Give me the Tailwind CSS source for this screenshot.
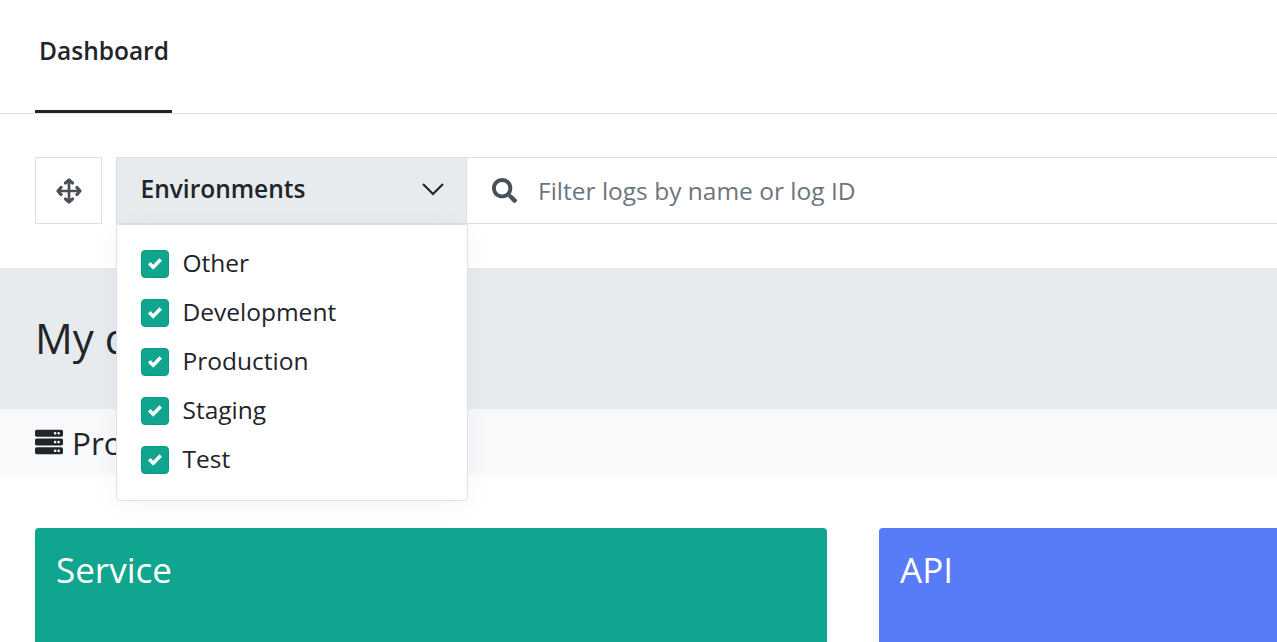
<!DOCTYPE html>
<html lang="en">
<head>
<meta charset="utf-8">
<title>Dashboard</title>
<script src="https://cdn.jsdelivr.net/npm/@tailwindcss/browser@4"></script>
</head>
<body class="flex h-[642px] flex-col overflow-hidden bg-white font-['Open_Sans',sans-serif] text-[#212529]">
<svg class="hidden">
  <symbol id="check" viewBox="0 0 8 8"><path fill="#fff" d="M6.564.75l-3.590 3.612-1.538-1.550L0 4.260 2.974 7.250 8 2.193z"/></symbol>
</svg>
<nav class="flex h-[114px] shrink-0 border-b border-[#dee2e6] pl-[35px]">
  <a class="h-[113px] w-[137px] border-b-3 border-[#212529] pt-[34px] pl-[1px] text-center text-[24.5px] leading-[34px] font-semibold">Dashboard</a>
</nav>
<div class="flex h-[154px] shrink-0 pt-[43px] pl-[35px]">
  <button class="mr-[14px] flex h-[67px] w-[67px] items-center justify-center border border-[#dadfee]">
    <svg class="size-[26px]" viewBox="0 0 26 26" fill="none" stroke="#495057" stroke-width="2.7"><path d="M13 2v22M2 13h22"/><path stroke-width="3.2" stroke-linecap="round" stroke-linejoin="round" d="M9.500 5L13 2l3.500 3M9.500 21L13 24l3.500-3M5 9.500L2 13l3 3.500M21 9.500L24 13l-3 3.500"/></svg>
  </button>
  <div class="relative h-[67px] w-[351px]">
    <button class="flex h-[67px] w-[351px] items-center justify-between border border-[#dadfee] bg-[#e7ebee] pr-[21.5px] pb-[4px] pl-[23.5px] text-[24.5px] font-semibold">
      <span class="pt-[2px]">Environments</span>
      <svg class="h-[14px] w-6" viewBox="0 0 24 14" fill="none" stroke="#212529" stroke-width="2.2"><path d="M2 2l10 10L22 2"/></svg>
    </button>
    <div class="absolute top-[67px] left-0 z-10 flex h-[277px] w-[352px] flex-col gap-[15px] rounded-b-[4px] border border-[#dadfee] bg-white pt-[21px] pl-6 text-[24.500px] leading-[34px] shadow-[0_4px_28px_rgba(30,10,40,0.045)]">
      <label class="flex h-[34px] gap-[13.5px]"><span class="mt-1 flex size-7 items-center justify-center rounded-[4px] border border-[#0b9a83] bg-[#0fa58e]"><svg class="size-[14px]"><use href="#check"/></svg></span><span>Other</span></label>
      <label class="flex h-[34px] gap-[13.5px]"><span class="mt-1 flex size-7 items-center justify-center rounded-[4px] border border-[#0b9a83] bg-[#0fa58e]"><svg class="size-[14px]"><use href="#check"/></svg></span><span>Development</span></label>
      <label class="flex h-[34px] gap-[13.5px]"><span class="mt-1 flex size-7 items-center justify-center rounded-[4px] border border-[#0b9a83] bg-[#0fa58e]"><svg class="size-[14px]"><use href="#check"/></svg></span><span>Production</span></label>
      <label class="flex h-[34px] gap-[13.5px]"><span class="mt-1 flex size-7 items-center justify-center rounded-[4px] border border-[#0b9a83] bg-[#0fa58e]"><svg class="size-[14px]"><use href="#check"/></svg></span><span>Staging</span></label>
      <label class="flex h-[34px] gap-[13.5px]"><span class="mt-1 flex size-7 items-center justify-center rounded-[4px] border border-[#0b9a83] bg-[#0fa58e]"><svg class="size-[14px]"><use href="#check"/></svg></span><span>Test</span></label>
    </div>
  </div>
  <div class="flex h-[67px] flex-1 items-center border-y border-[#dadfee] pl-[25px] text-[24.5px] text-[#6c757d]">
    <svg class="mr-[21px] size-[25px]" viewBox="0 0 512 512" fill="#495057"><path d="M505 442.700L405.300 343c-4.500-4.500-10.600-7-17-7H372c27.600-35.300 44-79.700 44-128C416 93.100 322.900 0 208 0S0 93.100 0 208s93.100 208 208 208c48.300 0 92.700-16.400 128-44v16.300c0 6.400 2.500 12.500 7 17l99.700 99.700c9.400 9.400 24.600 9.400 33.900 0l28.300-28.300c9.400-9.400 9.400-24.600.1-34zM208 336c-70.700 0-128-57.200-128-128 0-70.700 57.200-128 128-128 70.700 0 128 57.200 128 128 0 70.700-57.200 128-128 128z"/></svg>
    <span class="pt-[2px]">Filter logs by name or log ID</span>
  </div>
</div>
<header class="flex h-[141px] shrink-0 items-center bg-[#e7ebee] pb-[2px] pl-[35px]">
  <h1 class="text-[42px] leading-[56px]">My dashboard</h1>
</header>
<section class="flex h-[66px] shrink-0 items-center bg-[#f8f9fb] pl-[35px]">
  <svg class="mr-[9px] mb-[1px] size-7" viewBox="0 0 512 512" fill="#212529"><path d="M480 160H32c-17.673 0-32-14.327-32-32V64c0-17.673 14.327-32 32-32h448c17.673 0 32 14.327 32 32v64c0 17.673-14.327 32-32 32zm-48-88c-13.255 0-24 10.745-24 24s10.745 24 24 24 24-10.745 24-24-10.745-24-24-24zm-64 0c-13.255 0-24 10.745-24 24s10.745 24 24 24 24-10.745 24-24-10.745-24-24-24zm112 248H32c-17.673 0-32-14.327-32-32v-64c0-17.673 14.327-32 32-32h448c17.673 0 32 14.327 32 32v64c0 17.673-14.327 32-32 32zm-48-88c-13.255 0-24 10.745-24 24s10.745 24 24 24 24-10.745 24-24-10.745-24-24-24zm-64 0c-13.255 0-24 10.745-24 24s10.745 24 24 24 24-10.745 24-24-10.745-24-24-24zm112 248H32c-17.673 0-32-14.327-32-32v-64c0-17.673 14.327-32 32-32h448c17.673 0 32 14.327 32 32v64c0 17.673-14.327 32-32 32zm-48-88c-13.255 0-24 10.745-24 24s10.745 24 24 24 24-10.745 24-24-10.745-24-24-24zm-64 0c-13.255 0-24 10.745-24 24s10.745 24 24 24 24-10.745 24-24-10.745-24-24-24z"/></svg>
  <h2 class="pt-[2px] text-[31.500px] leading-[44px]">Production</h2>
</section>
<main class="flex min-h-0 flex-1 gap-[52px] pt-[53px] pl-[35px] text-[35px] leading-[48px] text-white">
  <div class="w-[792px] shrink-0 rounded-t-[4px] bg-[#0fa58e] pt-[18px] pl-[21px]">Service</div>
  <div class="flex-1 rounded-tl-[4px] bg-[#587bf8] pt-[18px] pl-[21px]">API</div>
</main>
</body>
</html>
